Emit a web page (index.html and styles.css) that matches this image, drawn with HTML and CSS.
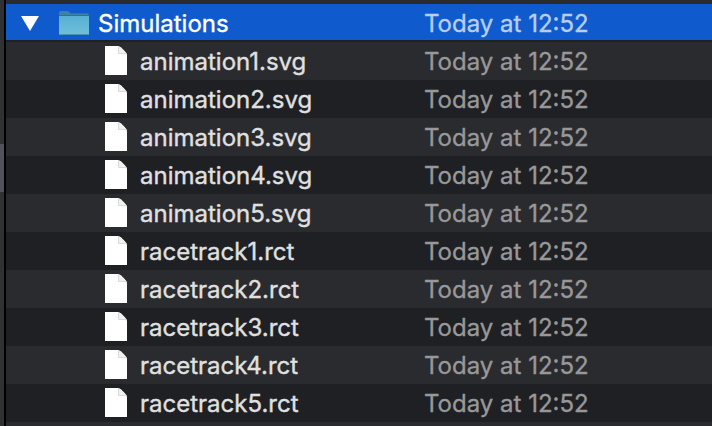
FILE: index.html
```html
<!DOCTYPE html>
<html lang="en">
<head>
<meta charset="utf-8">
<title>Simulations</title>
<link rel="stylesheet" href="styles.css">
</head>
<body>
<svg width="0" height="0" class="defs" aria-hidden="true">
  <symbol id="file" viewBox="0 0 22 29">
    <path d="M0 0H13Q14.500 0 16 1.500L20.500 6Q22 7.500 22 9V29H0Z" fill="#fff"/>
    <path d="M13.500 .5V7.500H21L19.500 5L16 1.500Z" fill="#f1f1f1"/>
    <path d="M13.500 .5V7.500H21.500" fill="none" stroke="#d2d2d2" stroke-width=".8"/>
  </symbol>
</svg>
<div class="window">
  <div class="edge"><div class="thumb"></div></div>
  <main class="list">
    <div class="row selected">
      <svg class="arrow" viewBox="0 0 18 15"><path d="M0 0H18L9 15Z" fill="#fff"/></svg>
      <svg class="folder" viewBox="0 0 30 24">
        <defs><linearGradient id="front" x2="0" y2="1"><stop stop-color="#58afd3"/><stop offset="1" stop-color="#70bfda"/></linearGradient></defs>
        <path d="M0 2Q0 0 2 0H8Q10 0 11 2L12 2.500H28.500Q30 2.500 30 4V8H0Z" fill="#3e83a5"/>
        <path d="M0 5H30V22.500Q30 24 28.500 24H1.500Q0 24 0 22.500Z" fill="url(#front)"/>
        <path d="M0 4.500H30" stroke="#346f90"/>
        <path d="M.5 23.500H29.500" stroke="#4c92b0"/>
      </svg>
      <span class="name">Simulations</span><span class="date">Today at 12:52</span>
    </div>
    <div class="row"><svg class="file"><use href="#file"/></svg><span class="name">animation1.svg</span><span class="date">Today at 12:52</span></div>
    <div class="row"><svg class="file"><use href="#file"/></svg><span class="name">animation2.svg</span><span class="date">Today at 12:52</span></div>
    <div class="row"><svg class="file"><use href="#file"/></svg><span class="name">animation3.svg</span><span class="date">Today at 12:52</span></div>
    <div class="row"><svg class="file"><use href="#file"/></svg><span class="name">animation4.svg</span><span class="date">Today at 12:52</span></div>
    <div class="row"><svg class="file"><use href="#file"/></svg><span class="name">animation5.svg</span><span class="date">Today at 12:52</span></div>
    <div class="row"><svg class="file"><use href="#file"/></svg><span class="name">racetrack1.rct</span><span class="date">Today at 12:52</span></div>
    <div class="row"><svg class="file"><use href="#file"/></svg><span class="name">racetrack2.rct</span><span class="date">Today at 12:52</span></div>
    <div class="row"><svg class="file"><use href="#file"/></svg><span class="name">racetrack3.rct</span><span class="date">Today at 12:52</span></div>
    <div class="row"><svg class="file"><use href="#file"/></svg><span class="name">racetrack4.rct</span><span class="date">Today at 12:52</span></div>
    <div class="row"><svg class="file"><use href="#file"/></svg><span class="name">racetrack5.rct</span><span class="date">Today at 12:52</span></div>
    <div class="row"></div>
  </main>
</div>
</body>
</html>
```
FILE: styles.css
```css
body { margin: 0; background: #1f2024; font-family: Inter, sans-serif; }
.defs { display: none; }
.window { display: flex; width: 712px; height: 426px; overflow: hidden; }
.edge { flex: none; width: 4px; padding-top: 144px; box-sizing: content-box; height: 282px; background: #303135; border-right: 2px solid #000; }
.thumb { height: 48px; background: #505357; }
.list { flex: 1; padding-top: 4px; background: #2a2b2e; }
.row { box-sizing: border-box; display: flex; align-items: center; height: 38px; font-size: 24px; background: #1f2024; color: #e0e0e1; -webkit-text-stroke: 0.35px; }
.row:nth-child(even) { background: #2a2b2e; }
.row.selected { background: #0f5bce; color: #fff; border-bottom: 2px solid #1f2024; }
.arrow { width: 18px; height: 15px; margin-left: 15px; margin-top: 3px; }
.folder { width: 30px; height: 24px; margin-left: 20px; margin-top: 2px; }
.file { width: 22px; height: 29px; margin-left: 99px; margin-top: -1px; }
.name { width: 284px; margin-left: 13px; white-space: nowrap; }
.selected .name { width: 326px; margin-left: 9px; }
.selected .name, .selected .date { position: relative; top: 1px; }
.date { color: #98989a; white-space: nowrap; }
.selected .date { color: #b7cef0; }
```
